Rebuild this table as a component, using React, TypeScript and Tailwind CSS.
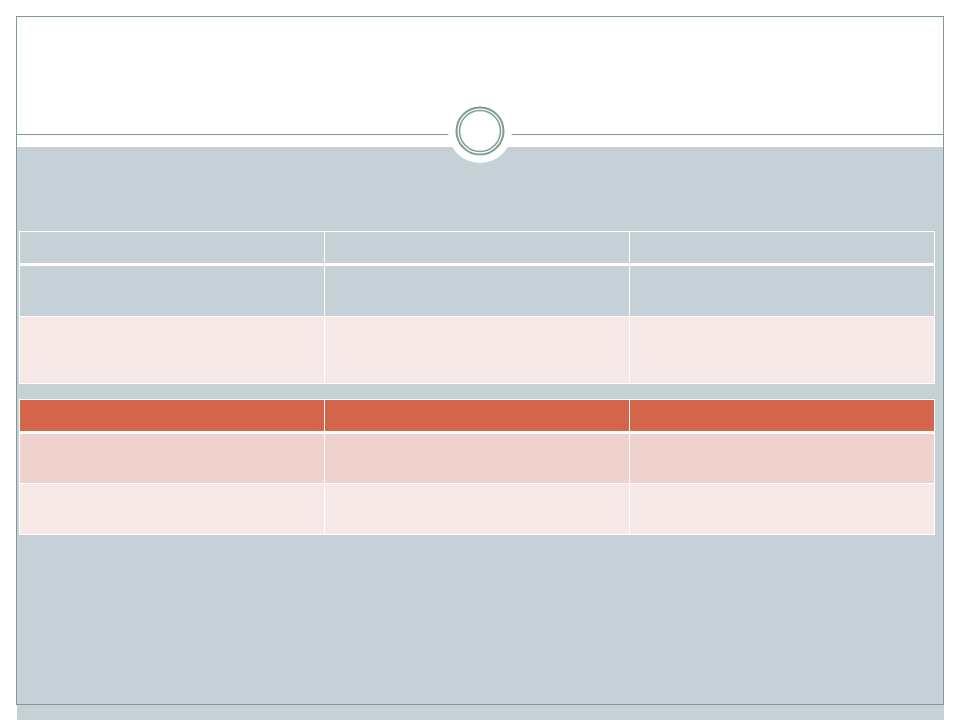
import React from "react";

function Row({ cells, h, bg }: { cells: number; h: string; bg: string }) {
  return (
    <div className="grid grid-cols-3 gap-px">
      {Array.from({ length: cells }).map((_, i) => (
        <div key={i} className={`${h} ${bg}`} />
      ))}
    </div>
  );
}

export default function App() {
  return (
    <div className="relative w-[960px] h-[720px] bg-white overflow-hidden" style={{ fontFamily: '"Liberation Sans", sans-serif' }}>
      <div className="pl-[17px] pt-[17px] flex flex-col">
        <div className="w-[926px] h-[117px] bg-white" />
        <div className="w-[926px] h-px bg-[#7f9a99]" />
        <div className="w-[926px] h-[12px] bg-white" />
        <div className="w-[927px] h-[573px] bg-[#c5d1d7] pl-[2px] pt-[84px] flex flex-col gap-[15px]">
          <div className="w-[916px] bg-white p-px flex flex-col gap-px">
            <div className="grid grid-cols-3 gap-px mb-[2px]">
              <div className="h-[31px] bg-[#c5d1d7]" />
              <div className="h-[31px] bg-[#c5d1d7]" />
              <div className="h-[31px] bg-[#c5d1d7]" />
            </div>
            <Row cells={3} h="h-[50px]" bg="bg-[#c5d1d7]" />
            <Row cells={3} h="h-[66px]" bg="bg-[#f6e8e7]" />
          </div>
          <div className="w-[916px] bg-white p-px flex flex-col gap-px">
            <div className="grid grid-cols-3 gap-px mb-[2px]">
              <div className="h-[31px] bg-[#d2654a]" />
              <div className="h-[31px] bg-[#d2654a]" />
              <div className="h-[31px] bg-[#d2654a]" />
            </div>
            <Row cells={3} h="h-[49px]" bg="bg-[#efd2ce]" />
            <Row cells={3} h="h-[50px]" bg="bg-[#f6e8e7]" />
          </div>
        </div>
      </div>
      <div className="absolute left-[16px] top-[16px] w-[928px] h-[689px] border border-[#7f9a99] pointer-events-none" />
      <svg className="absolute left-[448px] top-[99px]" width="64" height="64" viewBox="0 0 64 64">
        <circle cx="32" cy="32" r="32" fill="#ffffff" />
        <circle cx="32" cy="32" r="23.5" fill="none" stroke="#7f9a99" strokeWidth="2" />
        <circle cx="32" cy="32" r="20.5" fill="none" stroke="#7f9a99" strokeWidth="1.5" />
      </svg>
    </div>
  );
}
